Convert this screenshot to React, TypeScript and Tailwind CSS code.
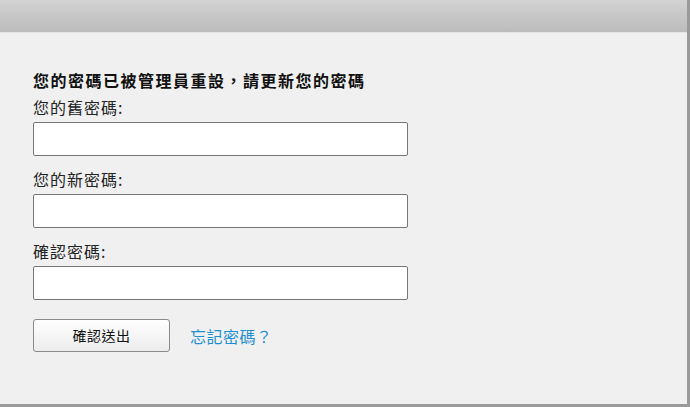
import { useState } from "react";

// Password reset form shown after an admin reset

interface FieldProps {
  label: string;
  value: string;
  onChange: (v: string) => void;
}

function Field({ label, value, onChange }: FieldProps) {
  return (
    <div className="flex flex-col">
      <label className="text-[16px] leading-[22px] tracking-[1px] text-[#222]">{label}</label>
      <input
        type="password"
        value={value}
        onChange={(e) => onChange(e.target.value)}
        className="mt-[4px] h-[34px] w-[375px] rounded-[2px] border border-[#767676] bg-white px-2 outline-none"
      />
    </div>
  );
}

export default function App() {
  const [oldPw, setOldPw] = useState("");
  const [newPw, setNewPw] = useState("");
  const [confirmPw, setConfirmPw] = useState("");

  return (
    <div
      className="h-[407px] w-[690px] bg-[#9a9a9a]"
      style={{ fontFamily: '"Noto Sans CJK TC", "Noto Sans", sans-serif' }}
    >
      <div className="flex h-[404px] w-[687px] flex-col bg-[#f0f0f0]">
        {/* Title bar */}
        <div className="h-[32px] shrink-0 bg-gradient-to-b from-[#d2d2d2] to-[#bcbcbc]" />
        <div className="h-[1px] shrink-0 bg-[#e6e6e6]" />

        {/* Form */}
        <div className="flex flex-col px-[33px] pt-[36px]">
          <h2 className="mb-[5px] text-[16px] font-bold leading-[22px] tracking-[1.5px] text-[#111]">
            您的密碼已被管理員重設，請更新您的密碼
          </h2>
          <div className="flex flex-col gap-[12px]">
            <Field label="您的舊密碼:" value={oldPw} onChange={setOldPw} />
            <Field label="您的新密碼:" value={newPw} onChange={setNewPw} />
            <Field label="確認密碼:" value={confirmPw} onChange={setConfirmPw} />
          </div>

          <div className="mt-[19px] flex items-center gap-[20px]">
            <button className="h-[33px] w-[137px] rounded-[3px] border border-[#8a8a8a] bg-gradient-to-b from-white to-[#ececec] text-[14px] tracking-[0.5px] text-[#111]">
              確認送出
            </button>
            <a href="#" className="text-[16px] tracking-[0.5px] text-[#1f8fd0]">
              忘記密碼？
            </a>
          </div>
        </div>
      </div>
    </div>
  );
}
